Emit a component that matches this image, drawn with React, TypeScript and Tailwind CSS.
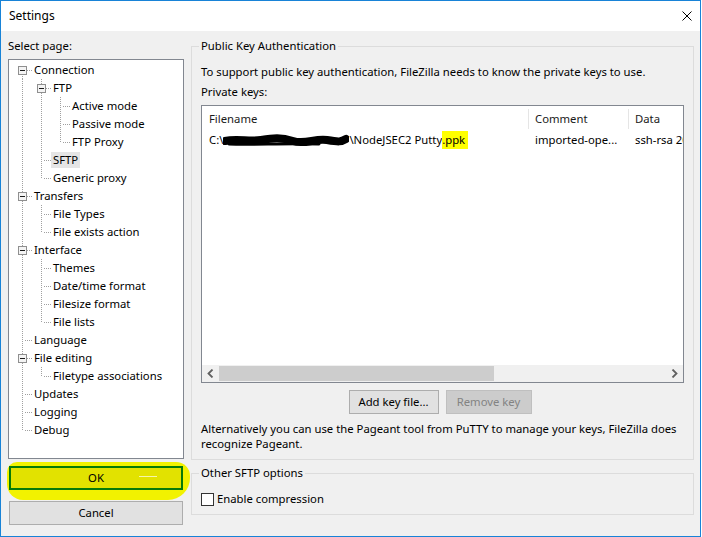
import React from "react";

type Node = { label: string; selected?: boolean; children?: Node[] };

const tree: Node[] = [
  {
    label: "Connection",
    children: [
      {
        label: "FTP",
        children: [{ label: "Active mode" }, { label: "Passive mode" }, { label: "FTP Proxy" }],
      },
      { label: "SFTP", selected: true },
      { label: "Generic proxy" },
    ],
  },
  { label: "Transfers", children: [{ label: "File Types" }, { label: "File exists action" }] },
  {
    label: "Interface",
    children: [
      { label: "Themes" },
      { label: "Date/time format" },
      { label: "Filesize format" },
      { label: "File lists" },
    ],
  },
  { label: "Language" },
  { label: "File editing", children: [{ label: "Filetype associations" }] },
  { label: "Updates" },
  { label: "Logging" },
  { label: "Debug" },
];

type Row = {
  label: string;
  level: number;
  selected: boolean;
  hasChildren: boolean;
  isLast: boolean;
  isFirstRoot: boolean;
  continues: boolean[];
};

function flatten(nodes: Node[], level: number, continues: boolean[], out: Row[]) {
  nodes.forEach((n, i) => {
    const isLast = i === nodes.length - 1;
    out.push({
      label: n.label,
      level,
      selected: !!n.selected,
      hasChildren: !!n.children,
      isLast,
      isFirstRoot: level === 0 && i === 0,
      continues,
    });
    if (n.children) flatten(n.children, level + 1, [...continues, !isLast], out);
  });
  return out;
}

const rows = flatten(tree, 0, [], []);

function TreeLines({ row }: { row: Row }) {
  const w = 23 + 19 * row.level;
  const x = 13 + 19 * row.level + 0.5;
  return (
    <svg width={w} height={18} className="shrink-0" shapeRendering="crispEdges">
      {row.continues.map((c, a) =>
        c ? (
          <line key={a} x1={13 + 19 * a + 0.5} y1={0} x2={13 + 19 * a + 0.5} y2={18} stroke="#a0a0a0" strokeDasharray="1 1" />
        ) : null
      )}
      <line x1={x} y1={row.isFirstRoot ? 9 : 0} x2={x} y2={row.isLast ? 9 : 18} stroke="#a0a0a0" strokeDasharray="1 1" />
      <line x1={x + 2} y1={9.5} x2={w} y2={9.5} stroke="#a0a0a0" strokeDasharray="1 1" />
      {row.hasChildren && (
        <g>
          <rect x={x - 4} y={5.5} width={8} height={8} fill="#f4f4f4" stroke="#8f8f8f" />
          <line x1={x - 2.5} y1={9.5} x2={x + 2.5} y2={9.5} stroke="#1a1a1a" />
        </g>
      )}
    </svg>
  );
}

function Chevron({ dir }: { dir: "left" | "right" }) {
  return (
    <svg width={7} height={9} viewBox="0 0 7 9">
      <path d={dir === "left" ? "M5.5 0.5 L1.5 4.5 L5.5 8.5" : "M1.5 0.5 L5.5 4.5 L1.5 8.5"} fill="none" stroke="#606060" strokeWidth={1.8} />
    </svg>
  );
}

export default function App() {
  return (
    <div className="w-[702px] h-[537px] bg-white font-['Noto_Sans','Liberation_Sans',sans-serif] text-[11.3px] leading-[16px] text-black">
      <div className="w-[701px] h-[537px] border border-[#1883d7] flex flex-col bg-[#f0f0f0]">
        {/* Title bar */}
        <div className="h-[30px] bg-white flex items-center justify-between pl-[8px] pr-[8px] shrink-0">
          <span className="text-[12px]">Settings</span>
          <svg width={10} height={10} viewBox="0 0 10 10">
            <path d="M0.5 0.5 L9.5 9.5 M9.5 0.5 L0.5 9.5" stroke="#000" strokeWidth={1} />
          </svg>
        </div>

        <div className="flex pl-[7px] pt-[7px]">
          {/* Left: page tree */}
          <div className="w-[176px] flex flex-col">
            <div className="h-[16px]">Select page:</div>
            <div className="mt-[5px] h-[400px] bg-white border border-[#828790] pt-[1px] overflow-hidden">
              {rows.map((r) => (
                <div key={r.label} className="h-[18px] flex items-center whitespace-nowrap">
                  <TreeLines row={r} />
                  <span className={"px-[2px] h-[16px] " + (r.selected ? "bg-[#e5e5e5]" : "")}>{r.label}</span>
                </div>
              ))}
            </div>
            <div className="relative mt-[7px] mx-[1px]">
              <div className="absolute -left-[2px] -right-[7px] -top-[4px] -bottom-[10px] rounded-tl-[10px] rounded-tr-[14px] rounded-bl-[16px] rounded-br-[22px] bg-[#f2f200]" />
              <button className="relative w-full h-[24px] border-2 border-[#077a07] bg-[#e2e200] flex items-center justify-center">
                OK
                <span className="absolute left-[128px] top-[8px] w-[18px] h-px bg-[#f6f6a8]" />
              </button>
            </div>
            <button className="mt-[11px] mx-[1px] h-[24px] border border-[#adadad] bg-[#e1e1e1] flex items-center justify-center">
              Cancel
            </button>
          </div>

          {/* Right: SFTP page */}
          <div className="ml-[7px] w-[503px] flex flex-col">
            <fieldset className="min-w-0 border border-[#dcdcdc] px-[9px] pb-[8px]">
              <legend className="-ml-[2px] px-[2px] leading-[16px]">Public Key Authentication</legend>
              <div className="mt-[10px] h-[16px] whitespace-nowrap">
                To support public key authentication, FileZilla needs to know the private keys to use.
              </div>
              <div className="mt-[4px] h-[16px]">Private keys:</div>

              <div className="mt-[5px] h-[278px] min-w-0 bg-white border border-[#828790] flex flex-col overflow-hidden">
                <div className="h-[25px] flex items-center shrink-0 text-[#1a1a1a]">
                  <div className="w-[326px] shrink-0 pl-[7px]">Filename</div>
                  <div className="w-px h-[20px] shrink-0 bg-[#e5e5e5]" />
                  <div className="w-[99px] shrink-0 pl-[6px]">Comment</div>
                  <div className="w-px h-[20px] shrink-0 bg-[#e5e5e5]" />
                  <div className="pl-[6px] whitespace-nowrap">Data</div>
                </div>
                <div className="h-[18px] flex items-center whitespace-nowrap shrink-0">
                  <div className="w-[327px] shrink-0 pl-[7px] flex items-center">
                    <span>C:\</span>
                    <svg width={126} height={14} viewBox="0 0 126 14" className="shrink-0">
                      <path
                        d="M2 8 C 14 5, 26 9, 38 7 S 58 4, 70 8 S 92 5, 104 7 S 118 9, 123 6"
                        fill="none"
                        stroke="#000"
                        strokeWidth={8}
                        strokeLinecap="round"
                      />
                      <path d="M6 11 C 30 12, 60 10, 96 11" fill="none" stroke="#000" strokeWidth={3} strokeLinecap="round" />
                    </svg>
                    <span>\NodeJSEC2 Putty</span>
                    <span className="bg-[#ffff00] pr-[3px] leading-[18px]">.ppk</span>
                  </div>
                  <div className="w-[100px] shrink-0 pl-[6px]">imported-ope...</div>
                  <div className="pl-[6px]">ssh-rsa 2048</div>
                </div>
                <div className="flex-1" />
                <div className="h-[17px] bg-[#f0f0f0] flex shrink-0">
                  <div className="w-[17px] shrink-0 flex items-center justify-center">
                    <Chevron dir="left" />
                  </div>
                  <div className="w-[275px] shrink-0 my-[1px] bg-[#cdcdcd]" />
                  <div className="flex-1" />
                  <div className="w-[17px] shrink-0 flex items-center justify-center">
                    <Chevron dir="right" />
                  </div>
                </div>
              </div>

              <div className="mt-[7px] flex justify-center gap-[7px] pr-[5px]">
                <button className="w-[90px] h-[24px] border border-[#adadad] bg-[#e1e1e1]">Add key file...</button>
                <button className="w-[86px] h-[24px] border border-[#bfbfbf] bg-[#cccccc] text-[#838383]" disabled>
                  Remove key
                </button>
              </div>

              <p className="mt-[7px] leading-[15px]">
                Alternatively you can use the Pageant tool from PuTTY to manage your keys, FileZilla does recognize Pageant.
              </p>
            </fieldset>

            <fieldset className="min-w-0 mt-[5px] border border-[#dcdcdc] px-[9px] pb-[7px]">
              <legend className="-ml-[2px] px-[2px] leading-[16px]">Other SFTP options</legend>
              <label className="mt-[10px] h-[16px] flex items-center gap-[3px]">
                <span className="w-[13px] h-[13px] border border-[#333333] bg-white shrink-0" />
                <span>Enable compression</span>
              </label>
            </fieldset>
          </div>
        </div>
      </div>
    </div>
  );
}
